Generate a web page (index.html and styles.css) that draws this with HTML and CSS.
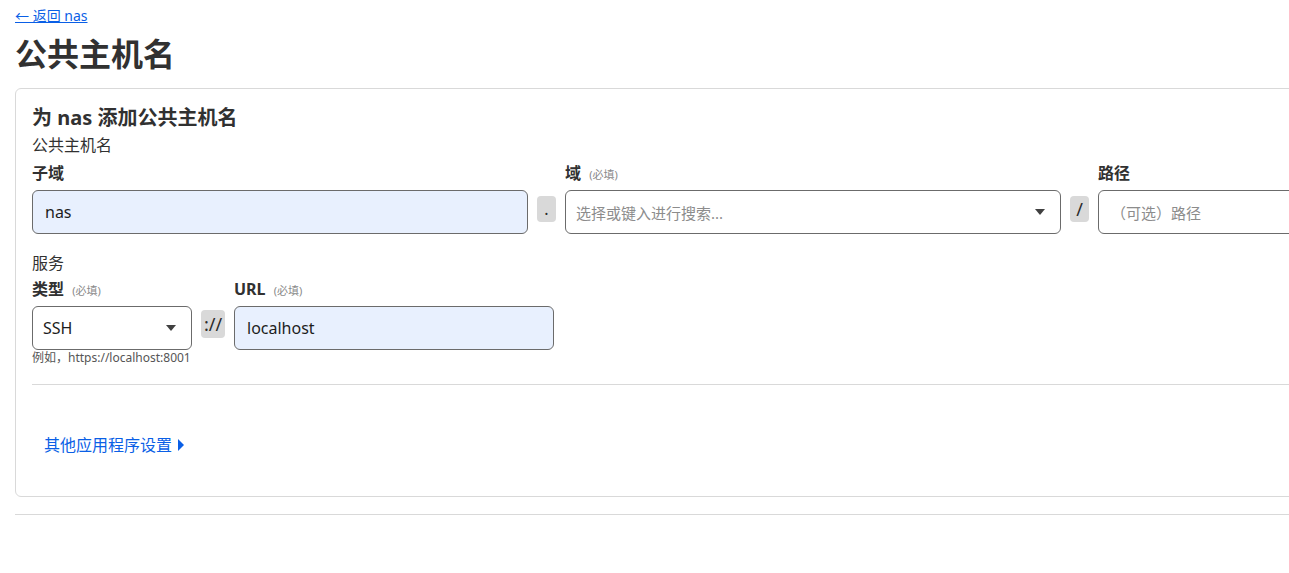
FILE: index.html
```html
<!DOCTYPE html>
<html lang="zh">
<head>
<meta charset="utf-8">
<title>公共主机名</title>
<link rel="stylesheet" href="styles.css">
</head>
<body>
<div class="page">
  <a class="back" href="#">← 返回 nas</a>
  <h1 class="title">公共主机名</h1>
  <section class="card">
    <h2 class="card-title">为 nas 添加公共主机名</h2>
    <div class="group-label">公共主机名</div>
    <div class="host-row">
      <div class="field">
        <div class="label">子域</div>
        <div class="input filled">nas</div>
      </div>
      <div class="sep"><span class="badge">.</span></div>
      <div class="field">
        <div class="label">域 <span class="req">(必填)</span></div>
        <div class="input select"><span class="placeholder">选择或键入进行搜索...</span><span class="caret"></span></div>
      </div>
      <div class="sep"><span class="badge slash">/</span></div>
      <div class="field">
        <div class="label">路径</div>
        <div class="input"><span class="placeholder">（可选）路径</span></div>
      </div>
    </div>
    <div class="group-label service">服务</div>
    <div class="svc-row">
      <div class="field type">
        <div class="label">类型 <span class="req">(必填)</span></div>
        <div class="input select">SSH<span class="caret"></span></div>
        <div class="hint">例如，https://localhost:8001</div>
      </div>
      <div class="sep"><span class="badge proto">://</span></div>
      <div class="field url">
        <div class="label">URL <span class="req">(必填)</span></div>
        <div class="input filled">localhost</div>
      </div>
    </div>
    <hr class="divider">
    <a class="more" href="#">其他应用程序设置 <span class="tri"></span></a>
  </section>
  <hr class="bottom-rule">
</div>
</body>
</html>
```

FILE: styles.css
```css
html, body {
  margin: 0;
  padding: 0;
  overflow: hidden;
  background: #fff;
}
body {
  font-family: "Noto Sans", "Noto Sans CJK SC", sans-serif;
  color: #313131;
}
.page {
  width: 1600px;
  padding: 4px 0 0 15px;
}
.back {
  display: inline-block;
  font-size: 14px;
  line-height: 20px;
  color: #0a5fe6;
  text-decoration: underline;
}
.title {
  margin: 8px 0 0;
  font-size: 32px;
  line-height: 40px;
  font-weight: 700;
  color: #313131;
}
.card {
  margin-top: 14px;
  border: 1px solid #d9d9d9;
  border-radius: 6px;
  padding: 16px 16px 0;
  height: 409px;
  box-sizing: border-box;
}
.card-title {
  margin: 0;
  font-size: 20px;
  line-height: 26px;
  font-weight: 700;
}
.group-label {
  font-size: 16px;
  line-height: 20px;
  margin-top: 4px;
}
.group-label.service {
  margin-top: 19px;
}
.label {
  display: flex;
  align-items: baseline;
  height: 20px;
  font-size: 16px;
  line-height: 20px;
  font-weight: 700;
  margin-top: 8px;
  margin-bottom: 7px;
  white-space: pre;
}
.svc-row .label {
  margin-top: 6px;
}
.req {
  font-size: 11px;
  line-height: 20px;
  font-weight: 400;
  color: #8a8a8a;
  margin-left: 4px;
}
.host-row, .svc-row {
  display: flex;
  gap: 9px;
}
.host-row .field {
  width: 496px;
}
.svc-row .type { width: 160px; }
.svc-row .url { width: 320px; }
.input {
  box-sizing: border-box;
  height: 44px;
  border: 1px solid #6b6b6b;
  border-radius: 6px;
  padding: 0 12px;
  display: flex;
  align-items: center;
  font-size: 16px;
  color: #1d1d1d;
  background: #fff;
}
.input.filled {
  background: #e8f0fe;
}
.input.select {
  padding-left: 10px;
  justify-content: space-between;
}
.placeholder {
  color: #8c8c8c;
  font-size: 15px;
}
.caret {
  width: 0;
  height: 0;
  border-left: 5px solid transparent;
  border-right: 5px solid transparent;
  border-top: 6px solid #404040;
  margin-right: 3px;
}
.sep {
  display: flex;
  align-items: flex-start;
}
.host-row .sep { padding-top: 41px; }
.svc-row .sep { padding-top: 37px; }
.badge {
  display: flex;
  align-items: center;
  justify-content: center;
  width: 19px;
  height: 26px;
  background: #d9d9d9;
  border-radius: 4px;
  font-size: 16px;
  color: #2a2a2a;
}
.badge.slash { font-size: 18px; }
.badge.proto {
  width: 24px;
  height: 28px;
  font-size: 18px;
}
.hint {
  font-size: 12px;
  line-height: 16px;
  color: #555;
  white-space: nowrap;
}
.divider {
  border: 0;
  border-top: 1px solid #d9d9d9;
  margin: 18px 0 0;
}
.more {
  display: inline-flex;
  align-items: center;
  gap: 6px;
  margin: 48px 0 0 12px;
  font-size: 16px;
  line-height: 24px;
  color: #0a5fe6;
  text-decoration: none;
}
.tri {
  width: 0;
  height: 0;
  border-top: 6px solid transparent;
  border-bottom: 6px solid transparent;
  border-left: 6px solid #0a5fe6;
}
.bottom-rule {
  border: 0;
  border-top: 1px solid #d9d9d9;
  margin: 17px 0 0;
}
```
